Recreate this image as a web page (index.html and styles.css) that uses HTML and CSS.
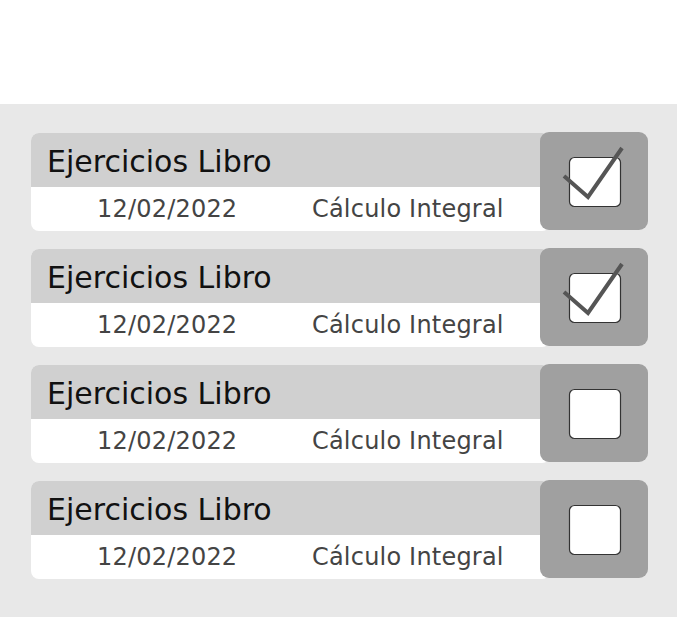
FILE: index.html
```html
<!DOCTYPE html>
<html lang="es">
<head>
<meta charset="utf-8">
<link rel="stylesheet" href="styles.css">
</head>
<body>
<div class="top"></div>
<main class="panel">
  <div class="row">
    <div class="card">
      <div class="title">Ejercicios Libro</div>
      <div class="meta"><span class="date">12/02/2022</span><span class="subject">Cálculo Integral</span></div>
    </div>
    <div class="check">
      <svg width="108" height="98" viewBox="0 0 108 98"><rect x="29.5" y="25.5" width="51" height="49" rx="5" fill="#fff" stroke="#333" stroke-width="1.2"/><path d="M24 44 L48 65 L82 16" fill="none" stroke="#555" stroke-width="4"/></svg>
    </div>
  </div>
  <div class="row">
    <div class="card">
      <div class="title">Ejercicios Libro</div>
      <div class="meta"><span class="date">12/02/2022</span><span class="subject">Cálculo Integral</span></div>
    </div>
    <div class="check">
      <svg width="108" height="98" viewBox="0 0 108 98"><rect x="29.5" y="25.5" width="51" height="49" rx="5" fill="#fff" stroke="#333" stroke-width="1.2"/><path d="M24 44 L48 65 L82 16" fill="none" stroke="#555" stroke-width="4"/></svg>
    </div>
  </div>
  <div class="row">
    <div class="card">
      <div class="title">Ejercicios Libro</div>
      <div class="meta"><span class="date">12/02/2022</span><span class="subject">Cálculo Integral</span></div>
    </div>
    <div class="check">
      <svg width="108" height="98" viewBox="0 0 108 98"><rect x="29.5" y="25.5" width="51" height="49" rx="5" fill="#fff" stroke="#333" stroke-width="1.2"/></svg>
    </div>
  </div>
  <div class="row">
    <div class="card">
      <div class="title">Ejercicios Libro</div>
      <div class="meta"><span class="date">12/02/2022</span><span class="subject">Cálculo Integral</span></div>
    </div>
    <div class="check">
      <svg width="108" height="98" viewBox="0 0 108 98"><rect x="29.5" y="25.5" width="51" height="49" rx="5" fill="#fff" stroke="#333" stroke-width="1.2"/></svg>
    </div>
  </div>
</main>
</body>
</html>
```
FILE: styles.css
```css
html, body {
  margin: 0;
  padding: 0;
  background: #fff;
}
body {
  font-family: "DejaVu Sans", "Noto Sans", sans-serif;
  height: 617px;
  display: flex;
  flex-direction: column;
}
.top {
  height: 104px;
  flex: none;
}
.panel {
  flex: 1;
  background: #e8e8e8;
  padding: 28px 29px 0 31px;
  display: flex;
  flex-direction: column;
  gap: 18px;
}
.row {
  display: flex;
  height: 98px;
}
.card {
  width: 519px;
  margin-right: -10px;
  background: #fff;
  border-radius: 8px;
  overflow: hidden;
  margin-top: 1px;
  height: 98px;
  display: flex;
  flex-direction: column;
}
.title {
  height: 54px;
  background: #d0d0d0;
  box-sizing: border-box;
  padding-left: 16px;
  font-size: 30px;
  line-height: 58px;
  color: #111;
}
.meta {
  flex: 1;
  display: flex;
  font-size: 24px;
  letter-spacing: 0.2px;
  color: #444;
  line-height: 44px;
}
.date {
  margin-left: 66px;
  width: 215px;
}
.check {
  position: relative;
  width: 108px;
  height: 98px;
  background: #a0a0a0;
  border-radius: 9px;
  flex: none;
}
.check svg {
  display: block;
  overflow: visible;
}
```
